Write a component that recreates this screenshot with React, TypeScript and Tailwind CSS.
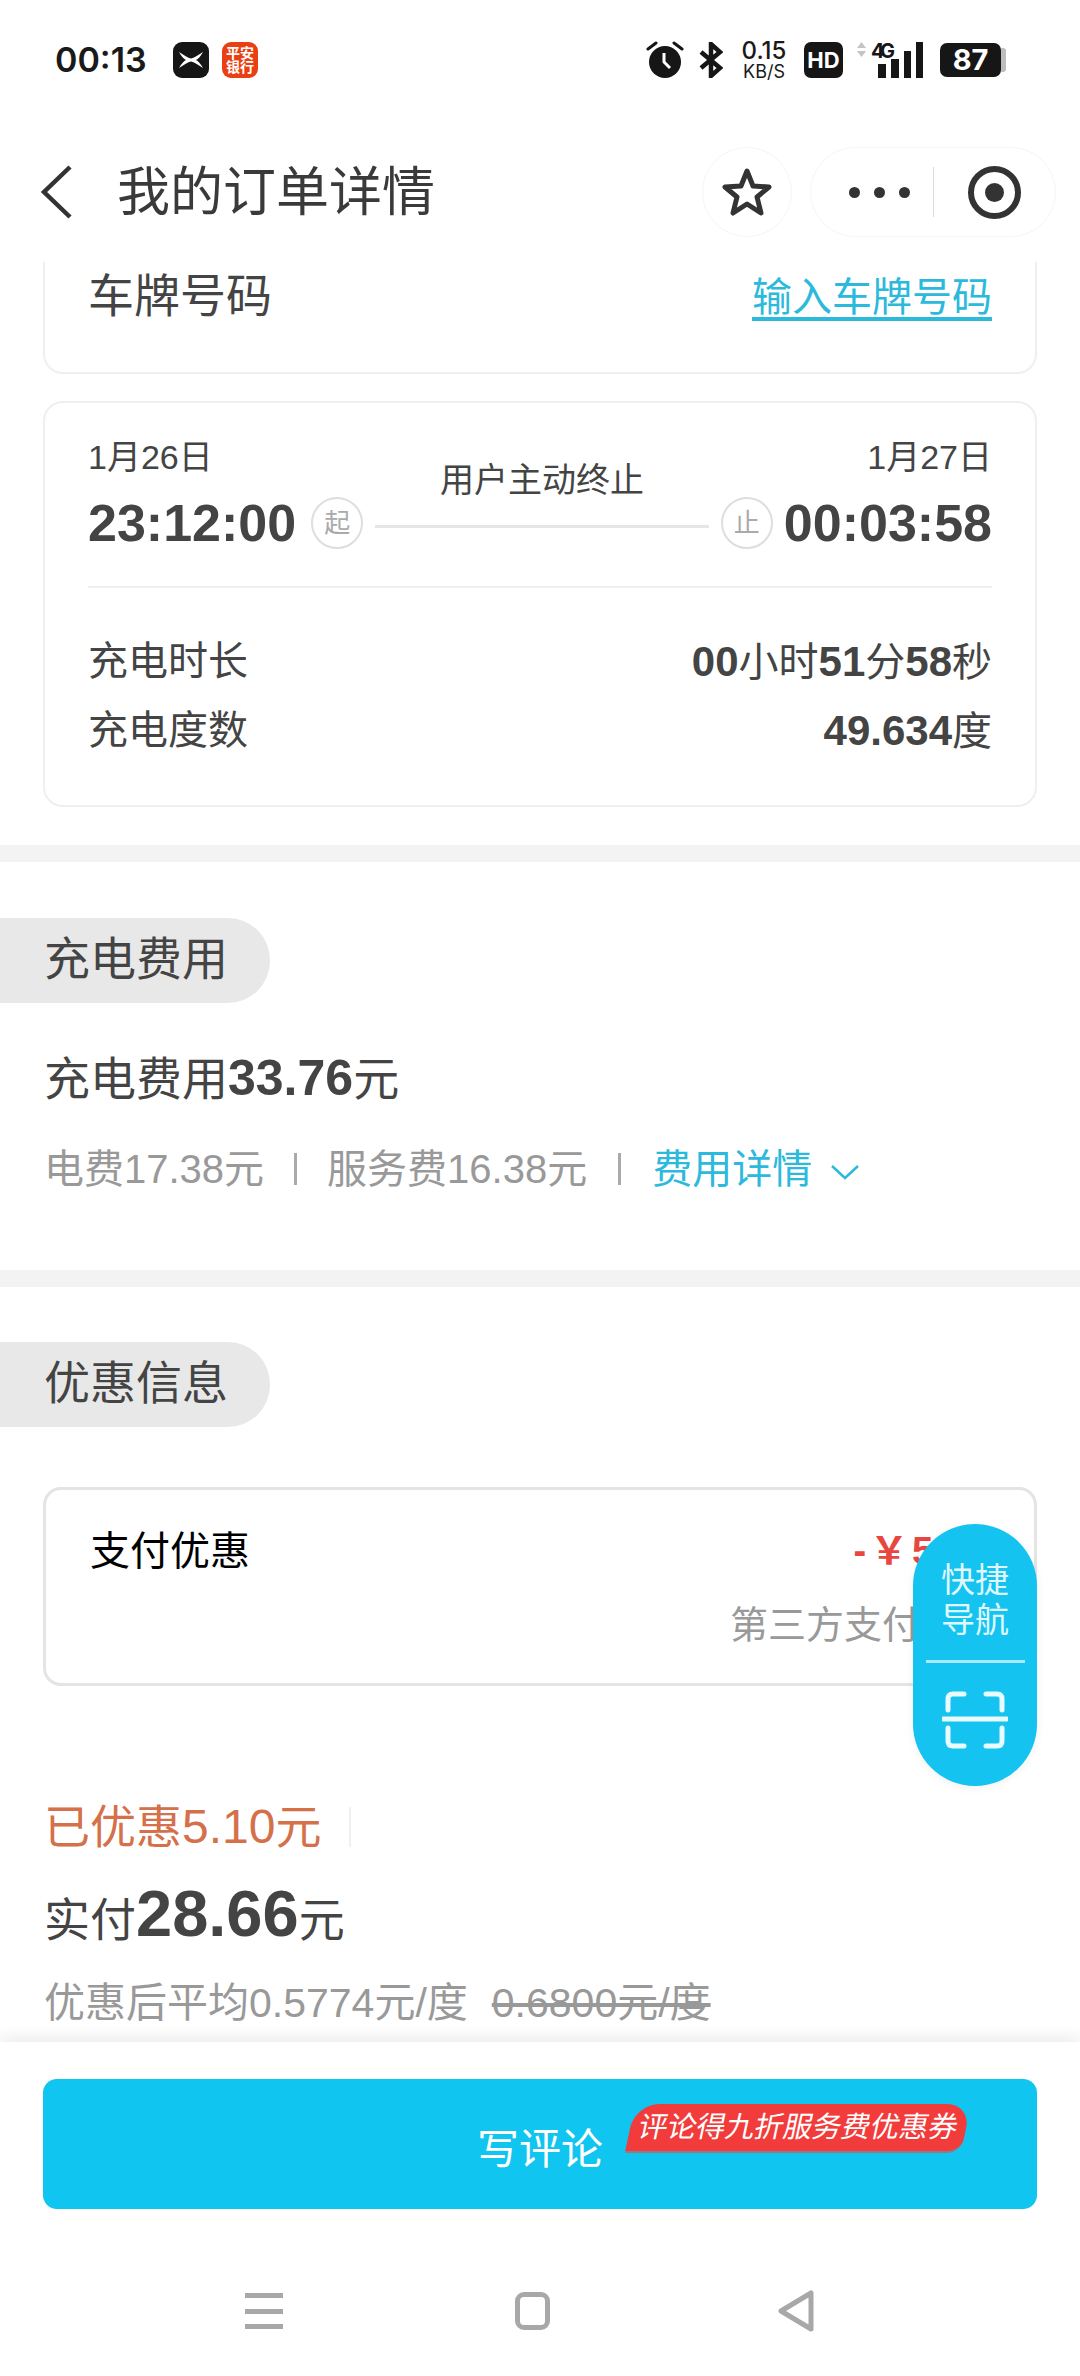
function StatusBar() {
  return (
    <div className="flex h-[96px] items-center pl-[55px] pt-[24px] pr-[74px] text-[#1a1a1a]">
      <span className="w-[118px] font-['Inter'] text-[34px] leading-none font-semibold">00:13</span>
      <span className="flex h-[36px] w-[36px] items-center justify-center rounded-[9px] bg-[#161616]">
        <svg width="26" height="18" viewBox="0 0 26 18" fill="white">
          <path d="M1 1 C6 4 10 7 13 7.500 C16 7 20 4 25 1 C23 5 20 8 18 9 C20 10 23 13 25 17 C20 14 16 11 13 10.500 C10 11 6 14 1 17 C3 13 6 10 8 9 C6 8 3 5 1 1 Z" />
        </svg>
      </span>
      <span className="ml-[13px] flex h-[36px] w-[36px] flex-col items-center justify-center rounded-[9px] bg-[#ea3f12] text-[14px] leading-[14px] font-bold text-white">
        <span>平安</span>
        <span>银行</span>
      </span>

      <div className="ml-auto flex items-center">
        {/* alarm */}
        <svg width="38" height="38" viewBox="0 0 38 38" fill="#161616">
          <circle cx="19" cy="21" r="16" />
          <path d="M2 8 L10 2 M36 8 L28 2" stroke="#161616" strokeWidth="3" strokeLinecap="round" />
          <path d="M18 12 V21 L24 27" stroke="white" strokeWidth="3" fill="none" />
        </svg>
        {/* bluetooth */}
        <svg className="ml-[15px]" width="24" height="36" viewBox="0 0 24 36" fill="none" stroke="#161616" strokeWidth="4.500">
          <path d="M2 10 L21 26 L12 34 V2 L21 10 L2 26" />
        </svg>
        <div className="ml-[15px] flex w-[52px] flex-col items-center font-['Inter'] font-medium">
          <span className="text-[24px] leading-[24px]">0.15</span>
          <span className="text-[18px] leading-[18px] font-normal">KB/S</span>
        </div>
        <span className="ml-[14px] flex h-[36px] w-[39px] items-center justify-center rounded-[7px] bg-[#161616] font-['Inter'] text-[22px] font-bold text-white">
          HD
        </span>
        {/* signal */}
        <svg className="ml-[14px] overflow-visible" width="68" height="36" viewBox="0 0 68 36">
          <path d="M0 6 L4.500 0 L9 6 Z M0 9 L4.500 15 L9 9 Z" fill="#c4c4c4" />
          <text x="14" y="16" fontFamily="Inter" fontSize="20" fontWeight="700" fill="#161616" textLength="24">4G</text>
          <rect x="21" y="22" width="8" height="14" fill="#161616" />
          <rect x="34" y="17" width="8" height="19" fill="#161616" />
          <rect x="47" y="9" width="7" height="27" fill="#161616" />
          <rect x="59" y="0" width="7" height="36" fill="#161616" />
        </svg>
        <div className="ml-[15px] flex items-center">
          <span className="flex h-[34px] w-[61px] items-center justify-center rounded-[7px] bg-[#161616] font-['Inter'] text-[29px] font-bold text-white">
            87
          </span>
          <span className="h-[24px] w-[5px] rounded-r-[3px] bg-[#bdbdbd]" />
        </div>
      </div>
    </div>
  )
}

function Header() {
  return (
    <div className="flex h-[166px] items-center pt-[26px]">
      <svg className="ml-[40px]" width="32" height="54" viewBox="0 0 32 54" fill="none" stroke="#333" strokeWidth="4.500">
        <path d="M30 2 L4 27 L30 52" />
      </svg>
      <h1 className="ml-[45px] text-[53px] leading-none text-[#3a3a3a]">我的订单详情</h1>
      <div className="ml-auto flex h-[90px] w-[90px] items-center justify-center rounded-full border border-[#f5f5f5]">
        <svg width="52" height="50" viewBox="0 0 52 50" fill="none" stroke="#333" strokeWidth="5" strokeLinejoin="round">
          <path d="M26 4 L32 19 L48 20 L36 30 L40 46 L26 37 L12 46 L16 30 L4 20 L20 19 Z" />
        </svg>
      </div>
      <div className="mr-[24px] ml-[18px] flex h-[90px] w-[246px] items-center rounded-full border border-[#f5f5f5]">
        <div className="ml-[38px] flex gap-[14px]">
          <span className="h-[11px] w-[11px] rounded-full bg-[#333]" />
          <span className="h-[11px] w-[11px] rounded-full bg-[#333]" />
          <span className="h-[11px] w-[11px] rounded-full bg-[#333]" />
        </div>
        <span className="ml-[23px] h-[50px] w-px bg-[#dcdcdc]" />
        <span className="ml-[34px] flex h-[53px] w-[53px] items-center justify-center rounded-full border-[6px] border-[#333]">
          <span className="h-[19px] w-[19px] rounded-full bg-[#333]" />
        </span>
      </div>
    </div>
  )
}

function Marker({ label }: { label: string }) {
  return (
    <span className="flex h-[52px] w-[52px] shrink-0 items-center justify-center rounded-full border-2 border-[#dedede] text-[26px] text-[#aaa]">
      {label}
    </span>
  )
}

function InfoRow({ label, children }: { label: string; children: React.ReactNode }) {
  return (
    <div className="flex h-[46px] items-center justify-between text-[40px]">
      <span>{label}</span>
      <span>{children}</span>
    </div>
  )
}

function SectionPill({ title }: { title: string }) {
  return (
    <div className="flex h-[85px] w-[270px] items-center rounded-r-[42px] bg-[#e8e8e8] pb-[3px] pl-[44px] text-[46px] text-[#444]">
      {title}
    </div>
  )
}

export default function App() {
  return (
    <div
      className="relative flex h-[2376px] w-[1080px] flex-col overflow-hidden bg-white font-['Liberation_Sans','Noto_Sans_CJK_SC',sans-serif] text-[#444]"
    >
      <StatusBar />
      <Header />

      <div className="h-[1780px] overflow-hidden">
        <div className="mx-[43px] flex h-[112px] items-start justify-between rounded-b-[20px] border-x-2 border-b-2 border-[#efefef] pr-[43px] pl-[43px]">
          <span className="flex h-[68px] items-center text-[46px]">车牌号码</span>
          <span className="flex h-[70px] items-center text-[40px] text-[#2bb9dc] underline underline-offset-[6px]">输入车牌号码</span>
        </div>

        <div className="mx-[43px] mt-[27px] h-[406px] rounded-[20px] border-2 border-[#efefef] px-[43px] pt-[34px]">
          <div className="flex h-[151px] items-start border-b-2 border-[#efefef] pb-[16px]">
            <div>
              <div className="h-[40px] text-[34px] leading-[40px]">1月26日</div>
              <div className="mt-[14px] flex items-center">
                <span className="text-[52px] leading-[64px] font-bold">23:12:00</span>
                <span className="ml-[15px]"><Marker label="起" /></span>
              </div>
            </div>
            <div className="mx-[12px] flex-1 pt-[22px] text-center">
              <div className="text-[34px] leading-[42px]">用户主动终止</div>
              <div className="mt-[24px] h-[3px] bg-[#e6e6e6]" />
            </div>
            <div className="flex flex-col items-end">
              <div className="h-[40px] text-[34px] leading-[40px]">1月27日</div>
              <div className="mt-[14px] flex items-center">
                <Marker label="止" />
                <span className="ml-[11px] text-[52px] leading-[64px] font-bold">00:03:58</span>
              </div>
            </div>
          </div>
          <div className="mt-[50px] flex flex-col gap-[23px]">
            <InfoRow label="充电时长">
              <b className="text-[42px]">00</b>小时<b className="text-[42px]">51</b>分<b className="text-[42px]">58</b>秒
            </InfoRow>
            <InfoRow label="充电度数">
              <b className="text-[42px]">49.634</b>度
            </InfoRow>
          </div>
        </div>

        <div className="mt-[38px] h-[17px] bg-[#f3f3f3]" />

        <div className="mt-[56px]">
          <SectionPill title="充电费用" />
        </div>
        <div className="mt-[49px] pl-[44px] text-[46px] leading-[52px]">
          充电费用<b className="text-[50px]">33.76</b>元
        </div>
        <div className="mt-[41px] flex h-[46px] items-center pl-[44px] text-[40px] text-[#999]">
          <span>电费17.38元</span>
          <span className="mx-[30px] h-[32px] w-[3px] bg-[#aaa]" />
          <span>服务费16.38元</span>
          <span className="mx-[31px] h-[32px] w-[3px] bg-[#aaa]" />
          <span className="text-[#2bb9dc]">费用详情</span>
          <svg className="mt-[6px] ml-[18px]" width="30" height="18" viewBox="0 0 30 18" fill="none" stroke="#2bb9dc" strokeWidth="2.500">
            <path d="M2 3 L15 15 L28 3" />
          </svg>
        </div>

        <div className="mt-[78px] h-[17px] bg-[#f3f3f3]" />

        <div className="mt-[55px]">
          <SectionPill title="优惠信息" />
        </div>

        <div className="mx-[43px] mt-[60px] flex h-[199px] justify-between rounded-[18px] border-[3px] border-[#e4e4e4] pt-[37px] pr-[38px] pl-[44px]">
          <span className="text-[40px] leading-[48px] text-black">支付优惠</span>
          <div className="flex flex-col items-end">
            <span className="-mr-[6px] text-[38px] leading-[48px] font-bold tracking-[4px] text-[#e8473f]">-￥5.10</span>
            <span className="mt-[27px] text-[38px] leading-[46px] text-[#999]">第三方支付优惠</span>
          </div>
        </div>

        <div className="mt-[115px] flex h-[52px] items-center pl-[44px] text-[46px] text-[#d4704a]">
          已优惠<span className="text-[48px]">5.10</span>元
          <span className="ml-[28px] h-[40px] w-[2px] bg-[#f0f0f0]" />
        </div>
        <div className="mt-[26px] flex h-[70px] items-end pl-[44px] text-[46px] leading-[58px]">
          实付<b className="text-[65px] leading-[70px]">28.66</b>元
        </div>
        <div className="mt-[32px] flex h-[46px] items-center pl-[44px] text-[41px] text-[#999]">
          优惠后平均0.5774元/度
          <span className="ml-[24px] line-through">0.6800元/度</span>
        </div>
      </div>

      <div className="relative flex-1 bg-white pt-[37px] shadow-[0_-6px_14px_rgba(0,0,0,0.07)]">
        <div className="relative mx-[43px] flex h-[130px] items-center justify-center rounded-[14px] bg-[#10c5f0] pt-[10px] text-[42px] text-white">
          写评论
          <span className="absolute top-[25px] right-[71px] flex h-[49px] w-[336px] -skew-x-12 items-center justify-center rounded-t-[24px] rounded-br-[14px] border-b-2 border-[#8a7f88] bg-[#f23c3c] text-[29px] text-white">
            评论得九折服务费优惠券
          </span>
        </div>

        <div className="mt-[81px] flex items-center pl-[245px]">
          <div className="flex h-[36px] w-[38px] flex-col justify-between">
            <span className="h-[5px] bg-[#a8a8a8]" />
            <span className="h-[5px] bg-[#a8a8a8]" />
            <span className="h-[5px] bg-[#a8a8a8]" />
          </div>
          <span className="ml-[232px] h-[38px] w-[35px] rounded-[9px] border-[5px] border-[#a8a8a8]" />
          <svg className="ml-[227px]" width="38" height="42" viewBox="0 0 38 42" fill="none" stroke="#a8a8a8" strokeWidth="5" strokeLinejoin="round">
            <path d="M34 3 V39 L4 21 Z" />
          </svg>
        </div>
      </div>

      {/* quick nav floats over the page */}
      <div className="absolute top-[1524px] left-[913px] flex h-[262px] w-[124px] flex-col items-center rounded-full bg-[#14c3ef] pt-[36px] text-[#dff8ff] shadow-[0_2px_10px_rgba(0,0,0,0.06)]">
        <div className="w-[68px] text-center text-[34px] leading-[40px]">快捷导航</div>
        <div className="mt-[20px] h-[3px] w-[99px] bg-[#a6ebfb]" />
        <svg className="mt-[28px]" width="66" height="58" viewBox="0 0 66 58" fill="none" stroke="#e8fbff" strokeWidth="5" strokeLinecap="round">
          <path d="M22 3 H11 Q6 3 6 8 V19 M44 3 H55 Q60 3 60 8 V19 M6 37 V50 Q6 55 11 55 H22 M60 37 V50 Q60 55 55 55 H44 M1 28 H65" />
        </svg>
      </div>
    </div>
  )
}
